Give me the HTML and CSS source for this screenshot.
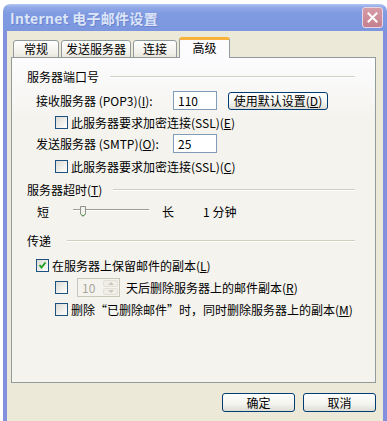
FILE: index.html
```html
<!DOCTYPE html>
<html lang="zh-CN">
<head>
  <meta charset="UTF-8">
  <title>Internet 电子邮件设置</title>
  <link rel="stylesheet" href="styles.css">
</head>
<body>
  <div class="window">
    <div class="titlebar">
      <span class="title">Internet 电子邮件设置</span>
      <span class="close-btn">
        <svg width="11" height="11" viewBox="0 0 11 11"><path d="M1.5 1.5 L9.5 9.5 M9.5 1.5 L1.5 9.5" stroke="#fff" stroke-width="2" stroke-linecap="square"/></svg>
      </span>
    </div>
    <div class="dialog-body">
      <div class="tabs">
        <div class="tab tab-general">常规</div>
        <div class="tab tab-outgoing">发送服务器</div>
        <div class="tab tab-connect">连接</div>
        <div class="tab tab-active">高级</div>
      </div>
      <div class="panel">
        <div class="group-title"><span>服务器端口号</span><i class="rule"></i></div>

        <div class="row port-row first-port">
          <label class="port-label">接收服务器 (POP3)(<u>I</u>):</label>
          <div class="textbox">110</div>
          <button class="btn btn-default">使用默认设置(<u>D</u>)</button>
        </div>
        <div class="row check-row indent2 gap-6">
          <span class="checkbox"></span>
          <span>此服务器要求加密连接(SSL)(<u>E</u>)</span>
        </div>
        <div class="row port-row gap-5">
          <label class="port-label">发送服务器 (SMTP)(<u>O</u>):</label>
          <div class="textbox">25</div>
        </div>
        <div class="row check-row indent2 gap-7">
          <span class="checkbox"></span>
          <span>此服务器要求加密连接(SSL)(<u>C</u>)</span>
        </div>

        <div class="group-title gap-10"><span>服务器超时(<u>T</u>)</span><i class="rule"></i></div>
        <div class="row slider-row gap-7">
          <span class="short">短</span>
          <div class="slider">
            <i class="track"></i>
            <svg class="thumb" width="8" height="13" viewBox="0 0 8 13">
              <path d="M1.5 1.5 H6.5 V9 L4 11.5 L1.5 9 Z" fill="#F3F3EE" stroke="#8E918A"/>
              <path d="M2.5 9.5 L4 11 L5.5 9.5" fill="none" stroke="#4BA14B"/>
            </svg>
          </div>
          <span class="long">长</span>
          <span class="minutes">1 分钟</span>
        </div>

        <div class="group-title gap-16"><span class="label-wide">传递</span><i class="rule"></i></div>
        <div class="row check-row indent1 gap-11">
          <span class="checkbox checked">
            <svg width="11" height="11" viewBox="0 0 11 11"><path d="M2.5 5 L4.5 7.5 L8.5 2.5" fill="none" stroke="#21A121" stroke-width="2"/></svg>
          </span>
          <span>在服务器上保留邮件的副本(<u>L</u>)</span>
        </div>
        <div class="row spin-row indent2 gap-6">
          <span class="checkbox"></span>
          <div class="spinner">
            <span class="spin-value">10</span>
            <span class="spin-buttons">
              <span class="spin-btn"><i class="arrow-up"></i></span>
              <span class="spin-btn"><i class="arrow-down"></i></span>
            </span>
          </div>
          <span>天后删除服务器上的邮件副本(<u>R</u>)</span>
        </div>
        <div class="row check-row indent2 gap-6">
          <span class="checkbox"></span>
          <span>删除“已删除邮件”时，同时删除服务器上的副本(<u>M</u>)</span>
        </div>
      </div>
      <div class="footer">
        <button class="btn btn-footer">确定</button>
        <button class="btn btn-footer">取消</button>
      </div>
    </div>
  </div>
</body>
</html>
```

FILE: styles.css
```css
body {
  margin: 0;
  background: #fff;
  font-family: "Noto Sans CJK SC", "DejaVu Sans", sans-serif;
  font-size: 12px;
  color: #000;
}
.window {
  margin: 4px 0 0 3px;
  width: 384px;
}
.titlebar {
  height: 27px;
  display: flex;
  align-items: center;
  padding: 0 4px 0 7px;
  border-radius: 7px 7px 0 0;
  background: linear-gradient(#B2C6F2 0, #93AAE8 3px, #809BE1 9px, #7C97DF 100%);
}
.title {
  flex: 1;
  font-size: 14px;
  font-weight: bold;
  color: #DCE5F8;
  letter-spacing: 0.3px;
  text-shadow: 1px 1px 0 #6C84CF;
}
.close-btn {
  width: 21px;
  height: 21px;
  box-sizing: border-box;
  border: 1px solid #E7D7E4;
  border-radius: 3px;
  background: linear-gradient(#D79BA6, #C4808F);
  display: flex;
  align-items: center;
  justify-content: center;
}
.dialog-body {
  background: #ECE9D8;
  border: 4px solid #8390DD;
  border-top: none;
  height: 385px;
  padding: 6px 7px 0 4px;
}
.tabs {
  display: flex;
  align-items: flex-end;
  gap: 2px;
  height: 21px;
  padding-left: 2px;
  margin-bottom: -1px;
  position: relative;
  z-index: 1;
}
.tab {
  height: 18px;
  box-sizing: border-box;
  border: 1px solid #919B9C;
  border-radius: 3px 3px 0 0;
  background: linear-gradient(#FFFFFF, #F2F1EB 70%, #E8E6DE);
  text-align: center;
  line-height: 16px;
}
.tab-general { width: 46px; }
.tab-outgoing { width: 70px; }
.tab-connect { width: 44px; }
.tab-active {
  width: 51px;
  height: 21px;
  border-bottom: none;
  border-top: 3px solid #F9B33B;
  background: #FCFCFE;
  line-height: 16px;
}
.panel {
  height: 326px;
  box-sizing: border-box;
  border: 1px solid #919B9C;
  background: linear-gradient(#FCFCFE, #F4F3EE 20%);
  padding: 12px 20px 0 15px;
}
.group-title {
  display: flex;
  align-items: center;
  height: 14px;
  line-height: 14px;
  gap: 11px;
}
.label-wide {
  width: 29px;
}
.rule {
  flex: 1;
  border-top: 1px solid #D0D0BF;
  border-bottom: 1px solid #fff;
}
.row {
  display: flex;
  align-items: center;
}
.port-row {
  height: 19px;
  padding-left: 9px;
}
.first-port { margin-top: 7px; }
.port-label {
  width: 137px;
}
.textbox {
  width: 44px;
  height: 19px;
  box-sizing: border-box;
  border: 1px solid #7F9DB9;
  background: #fff;
  padding-left: 4px;
  line-height: 17px;
}
.btn {
  font-family: inherit;
  font-size: 12px;
  color: #000;
  box-sizing: border-box;
  border: 1px solid #003C74;
  border-radius: 3px;
  background: linear-gradient(#FFFFFF, #F3F3EF 60%, #DEDDD4);
  padding: 0;
  line-height: 16px;
}
.btn-default {
  width: 100px;
  height: 18px;
  margin-left: 11px;
}
.check-row {
  height: 13px;
  line-height: 13px;
  gap: 3px;
}
.indent1 { padding-left: 9px; }
.indent2 { padding-left: 28px; }
.gap-5 { margin-top: 5px; }
.gap-6 { margin-top: 6px; }
.gap-7 { margin-top: 7px; }
.gap-10 { margin-top: 10px; }
.gap-11 { margin-top: 11px; }
.gap-16 { margin-top: 16px; }
.checkbox {
  width: 13px;
  height: 13px;
  box-sizing: border-box;
  border: 1px solid #1C5180;
  background: linear-gradient(135deg, #DCDBD4, #FFFFFF);
  display: flex;
  align-items: center;
  justify-content: center;
  flex-shrink: 0;
}
.slider-row {
  height: 14px;
  padding-left: 10px;
}
.slider {
  position: relative;
  width: 76px;
  height: 14px;
  margin-left: 24px;
}
.track {
  display: block;
  margin-top: 5px;
  border-top: 1px solid #9D9C96;
  border-bottom: 1px solid #fff;
}
.thumb {
  position: absolute;
  left: 6px;
  top: 1px;
}
.long {
  margin-left: 13px;
}
.minutes {
  margin-left: 29px;
}
.spin-row {
  height: 19px;
}
.spinner {
  width: 43px;
  height: 19px;
  box-sizing: border-box;
  border: 1px solid #C9C7BA;
  margin-left: 9px;
  margin-right: 6px;
  display: flex;
  align-items: stretch;
  background: #F4F3EE;
}
.spin-value {
  flex: 1;
  color: #ACA899;
  padding-left: 4px;
  line-height: 17px;
}
.spin-buttons {
  width: 15px;
  display: flex;
  flex-direction: column;
  padding: 1px 1px 1px 0;
  gap: 1px;
}
.spin-btn {
  flex: 1;
  border-radius: 2px;
  background: #EFEEE9;
  border: 1px solid #E1DFD6;
  display: flex;
  align-items: center;
  justify-content: center;
}
.arrow-up {
  border-left: 3px solid transparent;
  border-right: 3px solid transparent;
  border-bottom: 3px solid #C9C7BA;
}
.arrow-down {
  border-left: 3px solid transparent;
  border-right: 3px solid transparent;
  border-top: 3px solid #C9C7BA;
}
.footer {
  display: flex;
  justify-content: flex-end;
  gap: 8px;
  margin-top: 10px;
}
.btn-footer {
  width: 73px;
  height: 19px;
}
```
